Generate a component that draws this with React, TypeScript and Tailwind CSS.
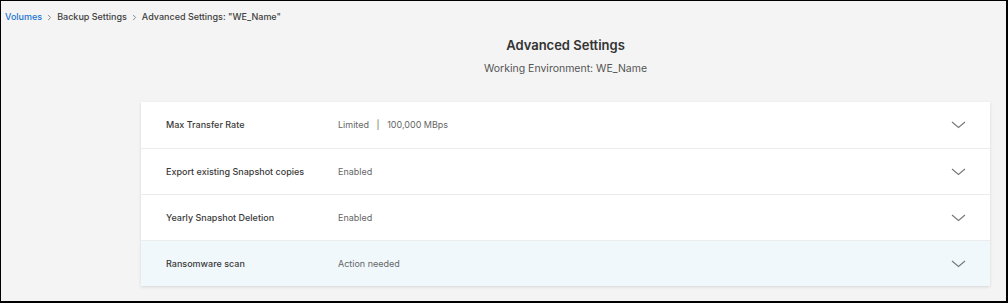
import React from 'react';
import { ChevronRight } from 'lucide-react';

const rows = [
  { label: 'Max Transfer Rate', value: 'Limited   |   100,000 MBps' },
  { label: 'Export existing Snapshot copies', value: 'Enabled' },
  { label: 'Yearly Snapshot Deletion', value: 'Enabled' },
  { label: 'Ransomware scan', value: 'Action needed', highlight: true },
];

function Chevron() {
  return (
    <svg width="15" height="8" viewBox="0 0 15 8" className="mr-[24px] shrink-0">
      <polyline points="1,1 7.5,6.5 14,1" fill="none" stroke="#777" strokeWidth="1.1" />
    </svg>
  );
}

export default function App() {
  return (
    <div className="w-[1008px] h-[303px] bg-[#f4f4f4] border-l border-t border-black border-r-2 border-b-2 overflow-hidden font-['Inter',sans-serif]">
      {/* Breadcrumb */}
      <div className="flex items-center gap-[3px] pl-[4px] pt-[10px] text-[9px] font-medium text-[#404040] leading-[12px]">
        <span className="text-[#1a74d0]">Volumes</span>
        <ChevronRight className="w-[9px] h-[9px] text-[#666]" strokeWidth={2} />
        <span>Backup Settings</span>
        <ChevronRight className="w-[9px] h-[9px] text-[#666]" strokeWidth={2} />
        <span>Advanced Settings: "WE_Name"</span>
      </div>

      <div className="ml-[140px] mr-[16px]">
        <div className="flex flex-col items-center">
          <h1 className="mt-[13px] text-[13px] font-semibold text-[#333] leading-[18px]">Advanced Settings</h1>
          <p className="mt-[8px] text-[10.5px] text-[#555] leading-[14px]">Working Environment: WE_Name</p>
        </div>

        <div className="mt-[26px] bg-white shadow-[0_1px_3px_rgba(0,0,0,0.12)]">
          {rows.map((r, i) => (
            <div
              key={r.label}
              className={`flex items-center h-[46px] ${i > 0 ? 'border-t border-[#ececec]' : ''} ${r.highlight ? 'bg-[#f0f8fc]' : ''}`}
            >
              <span className="w-[197px] pl-[25px] shrink-0 text-[9px] font-medium text-[#3a3a3a] whitespace-nowrap">{r.label}</span>
              <span className="flex-1 text-[9px] text-[#666] whitespace-pre">{r.value}</span>
              <Chevron />
            </div>
          ))}
        </div>
      </div>
    </div>
  );
}
